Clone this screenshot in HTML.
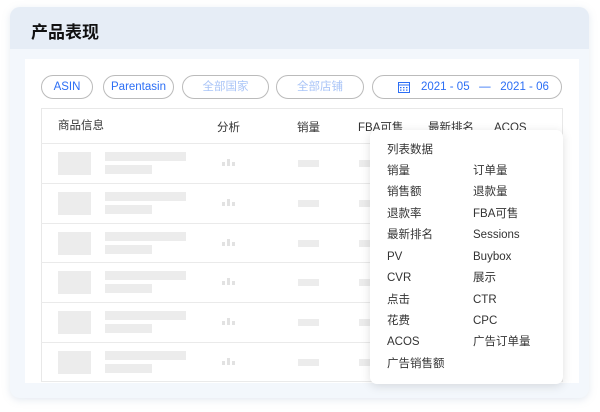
<!DOCTYPE html>
<html><head><meta charset="utf-8"><style>
*{margin:0;padding:0;box-sizing:border-box}
body{width:600px;height:412px;background:#fff;font-family:"Liberation Sans","Noto Sans CJK SC",sans-serif;position:relative;overflow:hidden}
.card{position:absolute;left:10px;top:7px;width:579px;height:391px;border-radius:10px;background:#f3f7fc;box-shadow:0 2px 8px rgba(150,170,200,.25);overflow:hidden}
.hd{height:42px;background:#e6edf6;font-size:17px;font-weight:bold;color:#111;padding:15px 0 0 21px;line-height:22px}
.panel{position:absolute;left:15px;top:52px;width:554px;height:324px;background:#fff}
.pill{position:absolute;top:75px;height:24px;border:1px solid #bbb;border-radius:12px;font-size:11.5px;color:#2b6ef5;text-align:center;line-height:22px;white-space:nowrap}
.dis{color:#a9c4f7}
.tbl{position:absolute;left:41px;top:108px;width:522px;height:274px;border:1px solid #e8e8e8;border-bottom:none}
.th{position:absolute;top:119px;font-size:11.5px;color:#333;line-height:14px;white-space:nowrap}
.row{position:absolute;left:41px;width:522px;height:1px;background:#eaeaea}
.sk{position:absolute;background:#ececec}
.pop{position:absolute;left:370px;top:130px;width:193px;height:254px;background:#fff;border-radius:7px;box-shadow:0 2px 10px rgba(0,0,0,.13)}
.pi{position:absolute;font-size:11.5px;color:#333;line-height:14px;white-space:nowrap}
</style></head><body>
<div class="card"><div class="hd">产品表现</div><div class="panel"></div></div>
<div class="pill" style="left:41px;width:52px">ASIN</div>
<div class="pill" style="left:103px;width:71px">Parentasin</div>
<div class="pill dis" style="left:182px;width:87px">全部国家</div>
<div class="pill dis" style="left:276px;width:88px">全部店铺</div>
<div class="pill" style="left:372px;width:190px"><svg style="position:absolute;left:25px;top:5px" width="12" height="12" viewBox="0 0 12 12"><rect x="0.5" y="1.5" width="11" height="10" fill="none" stroke="#2b6ef5"/><line x1="0" y1="4" x2="12" y2="4" stroke="#2b6ef5"/><g fill="#2b6ef5"><rect x="2" y="6" width="1.5" height="1.2"/><rect x="5" y="6" width="1.5" height="1.2"/><rect x="8" y="6" width="1.5" height="1.2"/><rect x="2" y="8.5" width="1.5" height="1.2"/><rect x="5" y="8.5" width="1.5" height="1.2"/><rect x="8" y="8.5" width="1.5" height="1.2"/></g></svg><span style="position:absolute;left:48px">2021 - 05 &nbsp;&nbsp;— &nbsp;&nbsp;2021 - 06</span></div>
<div class="tbl"></div>
<div class="th" style="left:58px">商品信息</div>
<div class="th" style="left:217px;top:121px">分析</div>
<div class="th" style="left:297px;top:121px">销量</div>
<div class="th" style="left:358px;top:121px">FBA可售</div>
<div class="th" style="left:428px;top:121px">最新排名</div>
<div class="th" style="left:494px;top:121px">ACOS</div>
<div class="row" style="top:143px"></div><div class="row" style="top:183px"></div><div class="row" style="top:223px"></div><div class="row" style="top:262px"></div><div class="row" style="top:302px"></div><div class="row" style="top:342px"></div><div class="row" style="top:381px"></div>
<div id="sk"></div>
<script>
var h='';[152,192,232,271,311,351].forEach(function(y){
h+='<div class="sk" style="left:58px;top:'+y+'px;width:33px;height:23px"></div>';
h+='<div class="sk" style="left:105px;top:'+y+'px;width:81px;height:9px"></div>';
h+='<div class="sk" style="left:105px;top:'+(y+13)+'px;width:47px;height:9px"></div>';
h+='<div class="sk" style="left:222px;top:'+(y+10)+'px;width:3px;height:4px;background:#e2e2e2"></div><div class="sk" style="left:227px;top:'+(y+7)+'px;width:3px;height:7px;background:#e2e2e2"></div><div class="sk" style="left:232px;top:'+(y+10)+'px;width:3px;height:4px;background:#e2e2e2"></div>';
h+='<div class="sk" style="left:298px;top:'+(y+8)+'px;width:21px;height:7px"></div>';
h+='<div class="sk" style="left:359px;top:'+(y+8)+'px;width:12px;height:7px"></div>';});
document.getElementById('sk').innerHTML=h;
</script>
<div class="pop">
<div class="pi" style="left:17px;top:13px">列表数据</div>
<div class="pi" style="left:17px;top:34px">销量</div><div class="pi" style="left:103px;top:34px">订单量</div>
<div class="pi" style="left:17px;top:55px">销售额</div><div class="pi" style="left:103px;top:55px">退款量</div>
<div class="pi" style="left:17px;top:77px">退款率</div><div class="pi" style="left:103px;top:77px">FBA可售</div>
<div class="pi" style="left:17px;top:98px">最新排名</div><div class="pi" style="left:103px;top:98px">Sessions</div>
<div class="pi" style="left:17px;top:120px">PV</div><div class="pi" style="left:103px;top:120px">Buybox</div>
<div class="pi" style="left:17px;top:141px">CVR</div><div class="pi" style="left:103px;top:141px">展示</div>
<div class="pi" style="left:17px;top:163px">点击</div><div class="pi" style="left:103px;top:163px">CTR</div>
<div class="pi" style="left:17px;top:184px">花费</div><div class="pi" style="left:103px;top:184px">CPC</div>
<div class="pi" style="left:17px;top:205px">ACOS</div><div class="pi" style="left:103px;top:205px">广告订单量</div>
<div class="pi" style="left:17px;top:227px">广告销售额</div>
</div>
</body></html>
